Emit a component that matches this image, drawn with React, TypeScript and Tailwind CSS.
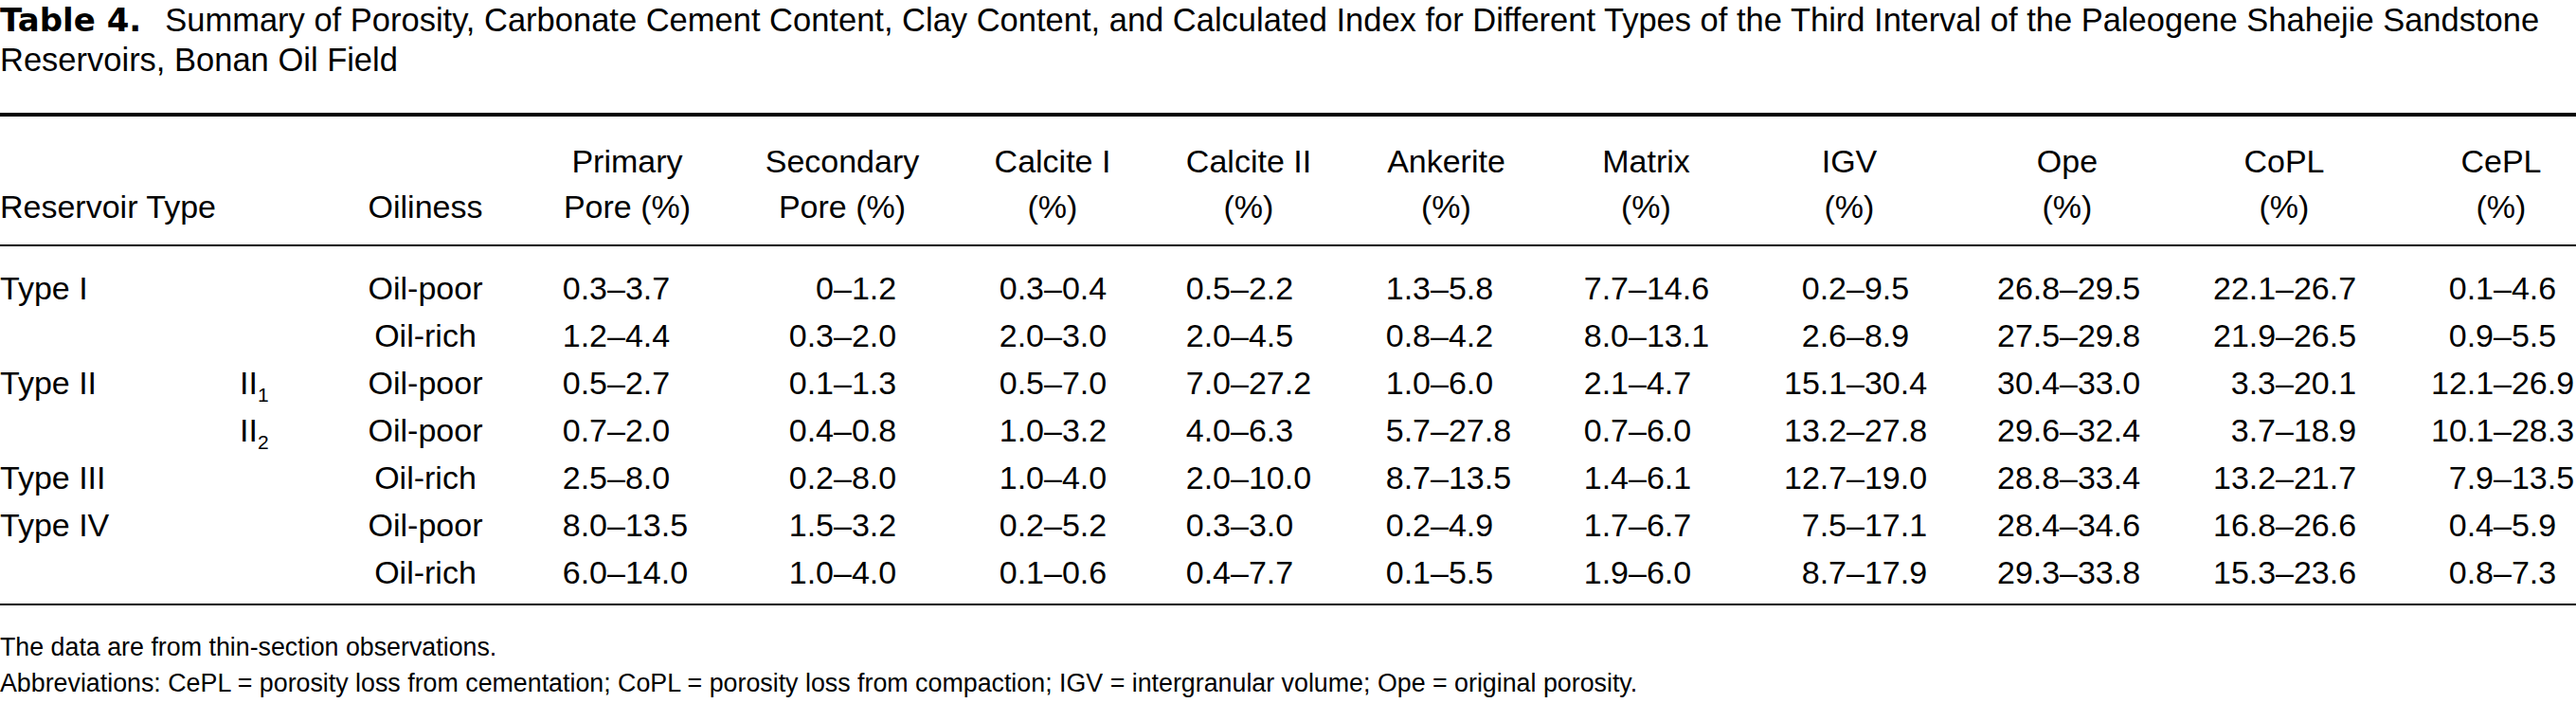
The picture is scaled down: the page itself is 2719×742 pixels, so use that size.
const grid =
  'grid grid-cols-[253px_117px_185px_220px_225px_214px_208px_209px_213px_223px_230px_228px_194px]';

const columns = [
  { head: ['Primary', 'Pore (%)'], hc: 'pr-[6px]', dc: 'pl-[20px]' },
  { head: ['Secondary', 'Pore (%)'], hc: 'pl-[3px]', dc: 'pl-[39px]' },
  { head: ['Calcite I', '(%)'], hc: 'pl-[8px]', dc: 'pl-[36px]' },
  { head: ['Calcite II', '(%)'], hc: '', dc: 'pl-[19px]' },
  { head: ['Ankerite', '(%)'], hc: '', dc: 'pl-[22px]' },
  { head: ['Matrix', '(%)'], hc: '', dc: 'pl-[22px]' },
  { head: ['IGV', '(%)'], hc: 'pr-[7px]', dc: 'pl-[39px]' },
  { head: ['Ope', '(%)'], hc: '', dc: 'pl-[41px]' },
  { head: ['CoPL', '(%)'], hc: '', dc: 'pl-[39px]' },
  { head: ['CePL', '(%)'], hc: 'pl-[36px]', dc: 'pl-[41px]' },
];

type Row = { type: string; sub?: string; oil: string; values: string[] };

const rows: Row[] = [
  {
    type: 'Type I',
    oil: 'Oil-poor',
    values: ['0.3–3.7', '0–1.2', '0.3–0.4', '0.5–2.2', '1.3–5.8', '7.7–14.6', '0.2–9.5', '26.8–29.5', '22.1–26.7', '0.1–4.6'],
  },
  {
    type: '',
    oil: 'Oil-rich',
    values: ['1.2–4.4', '0.3–2.0', '2.0–3.0', '2.0–4.5', '0.8–4.2', '8.0–13.1', '2.6–8.9', '27.5–29.8', '21.9–26.5', '0.9–5.5'],
  },
  {
    type: 'Type II',
    sub: '1',
    oil: 'Oil-poor',
    values: ['0.5–2.7', '0.1–1.3', '0.5–7.0', '7.0–27.2', '1.0–6.0', '2.1–4.7', '15.1–30.4', '30.4–33.0', '3.3–20.1', '12.1–26.9'],
  },
  {
    type: '',
    sub: '2',
    oil: 'Oil-poor',
    values: ['0.7–2.0', '0.4–0.8', '1.0–3.2', '4.0–6.3', '5.7–27.8', '0.7–6.0', '13.2–27.8', '29.6–32.4', '3.7–18.9', '10.1–28.3'],
  },
  {
    type: 'Type III',
    oil: 'Oil-rich',
    values: ['2.5–8.0', '0.2–8.0', '1.0–4.0', '2.0–10.0', '8.7–13.5', '1.4–6.1', '12.7–19.0', '28.8–33.4', '13.2–21.7', '7.9–13.5'],
  },
  {
    type: 'Type IV',
    oil: 'Oil-poor',
    values: ['8.0–13.5', '1.5–3.2', '0.2–5.2', '0.3–3.0', '0.2–4.9', '1.7–6.7', '7.5–17.1', '28.4–34.6', '16.8–26.6', '0.4–5.9'],
  },
  {
    type: '',
    oil: 'Oil-rich',
    values: ['6.0–14.0', '1.0–4.0', '0.1–0.6', '0.4–7.7', '0.1–5.5', '1.9–6.0', '8.7–17.9', '29.3–33.8', '15.3–23.6', '0.8–7.3'],
  },
];

function Range({ value, className }: { value: string; className: string }) {
  const [lo, hi] = value.split('–');
  return (
    <div className={`flex whitespace-nowrap ${className}`}>
      <span className="w-[66px] text-right">{lo}</span>
      <span>–</span>
      <span>{hi}</span>
    </div>
  );
}

export default function App() {
  return (
    <div className="w-[2719px] bg-white text-black font-['Liberation_Sans',Arial,sans-serif]">
      {/* caption, broken where the journal breaks it */}
      <div className="text-[34.5px] leading-[42px] whitespace-nowrap">
        <div className="flex items-baseline">
          <span className="font-['DejaVu_Sans',sans-serif] font-bold text-[34px] mr-[25px]">Table 4.</span>
          <span>
            Summary of Porosity, Carbonate Cement Content, Clay Content, and Calculated Index for Different Types of
            the Third Interval of the Paleogene Shahejie Sandstone
          </span>
        </div>
        <div>Reservoirs, Bonan Oil Field</div>
      </div>

      <div className="mt-[35px] h-[4px] bg-black" />

      <div className={`${grid} items-end pt-[23px] pb-[16px] text-[34px] leading-[48px]`}>
        <div className="col-span-2 whitespace-nowrap">Reservoir Type</div>
        <div className="text-center pr-[27px]">Oiliness</div>
        {columns.map((c) => (
          <div key={c.head[0]} className={`text-center whitespace-nowrap ${c.hc}`}>
            <div>{c.head[0]}</div>
            <div>{c.head[1]}</div>
          </div>
        ))}
      </div>

      <div className="h-[2px] bg-black" />

      <div className="pt-[19px] pb-[8px] text-[34px] leading-[50px]">
        {rows.map((r, i) => (
          <div key={i} className={grid}>
            <div className="whitespace-nowrap">{r.type}</div>
            <div>
              {r.sub && (
                <span>
                  II<sub className="text-[21px] bottom-[-8px]">{r.sub}</sub>
                </span>
              )}
            </div>
            <div className="text-center pr-[27px]">{r.oil}</div>
            {r.values.map((v, j) => (
              <Range key={j} value={v} className={columns[j].dc} />
            ))}
          </div>
        ))}
      </div>

      <div className="h-[2px] bg-black" />

      <div className="mt-[25px] text-[26.8px] leading-[38px]">
        <p>The data are from thin-section observations.</p>
        <p>
          Abbreviations: CePL = porosity loss from cementation; CoPL = porosity loss from compaction; IGV =
          intergranular volume; Ope = original porosity.
        </p>
      </div>
    </div>
  );
}
